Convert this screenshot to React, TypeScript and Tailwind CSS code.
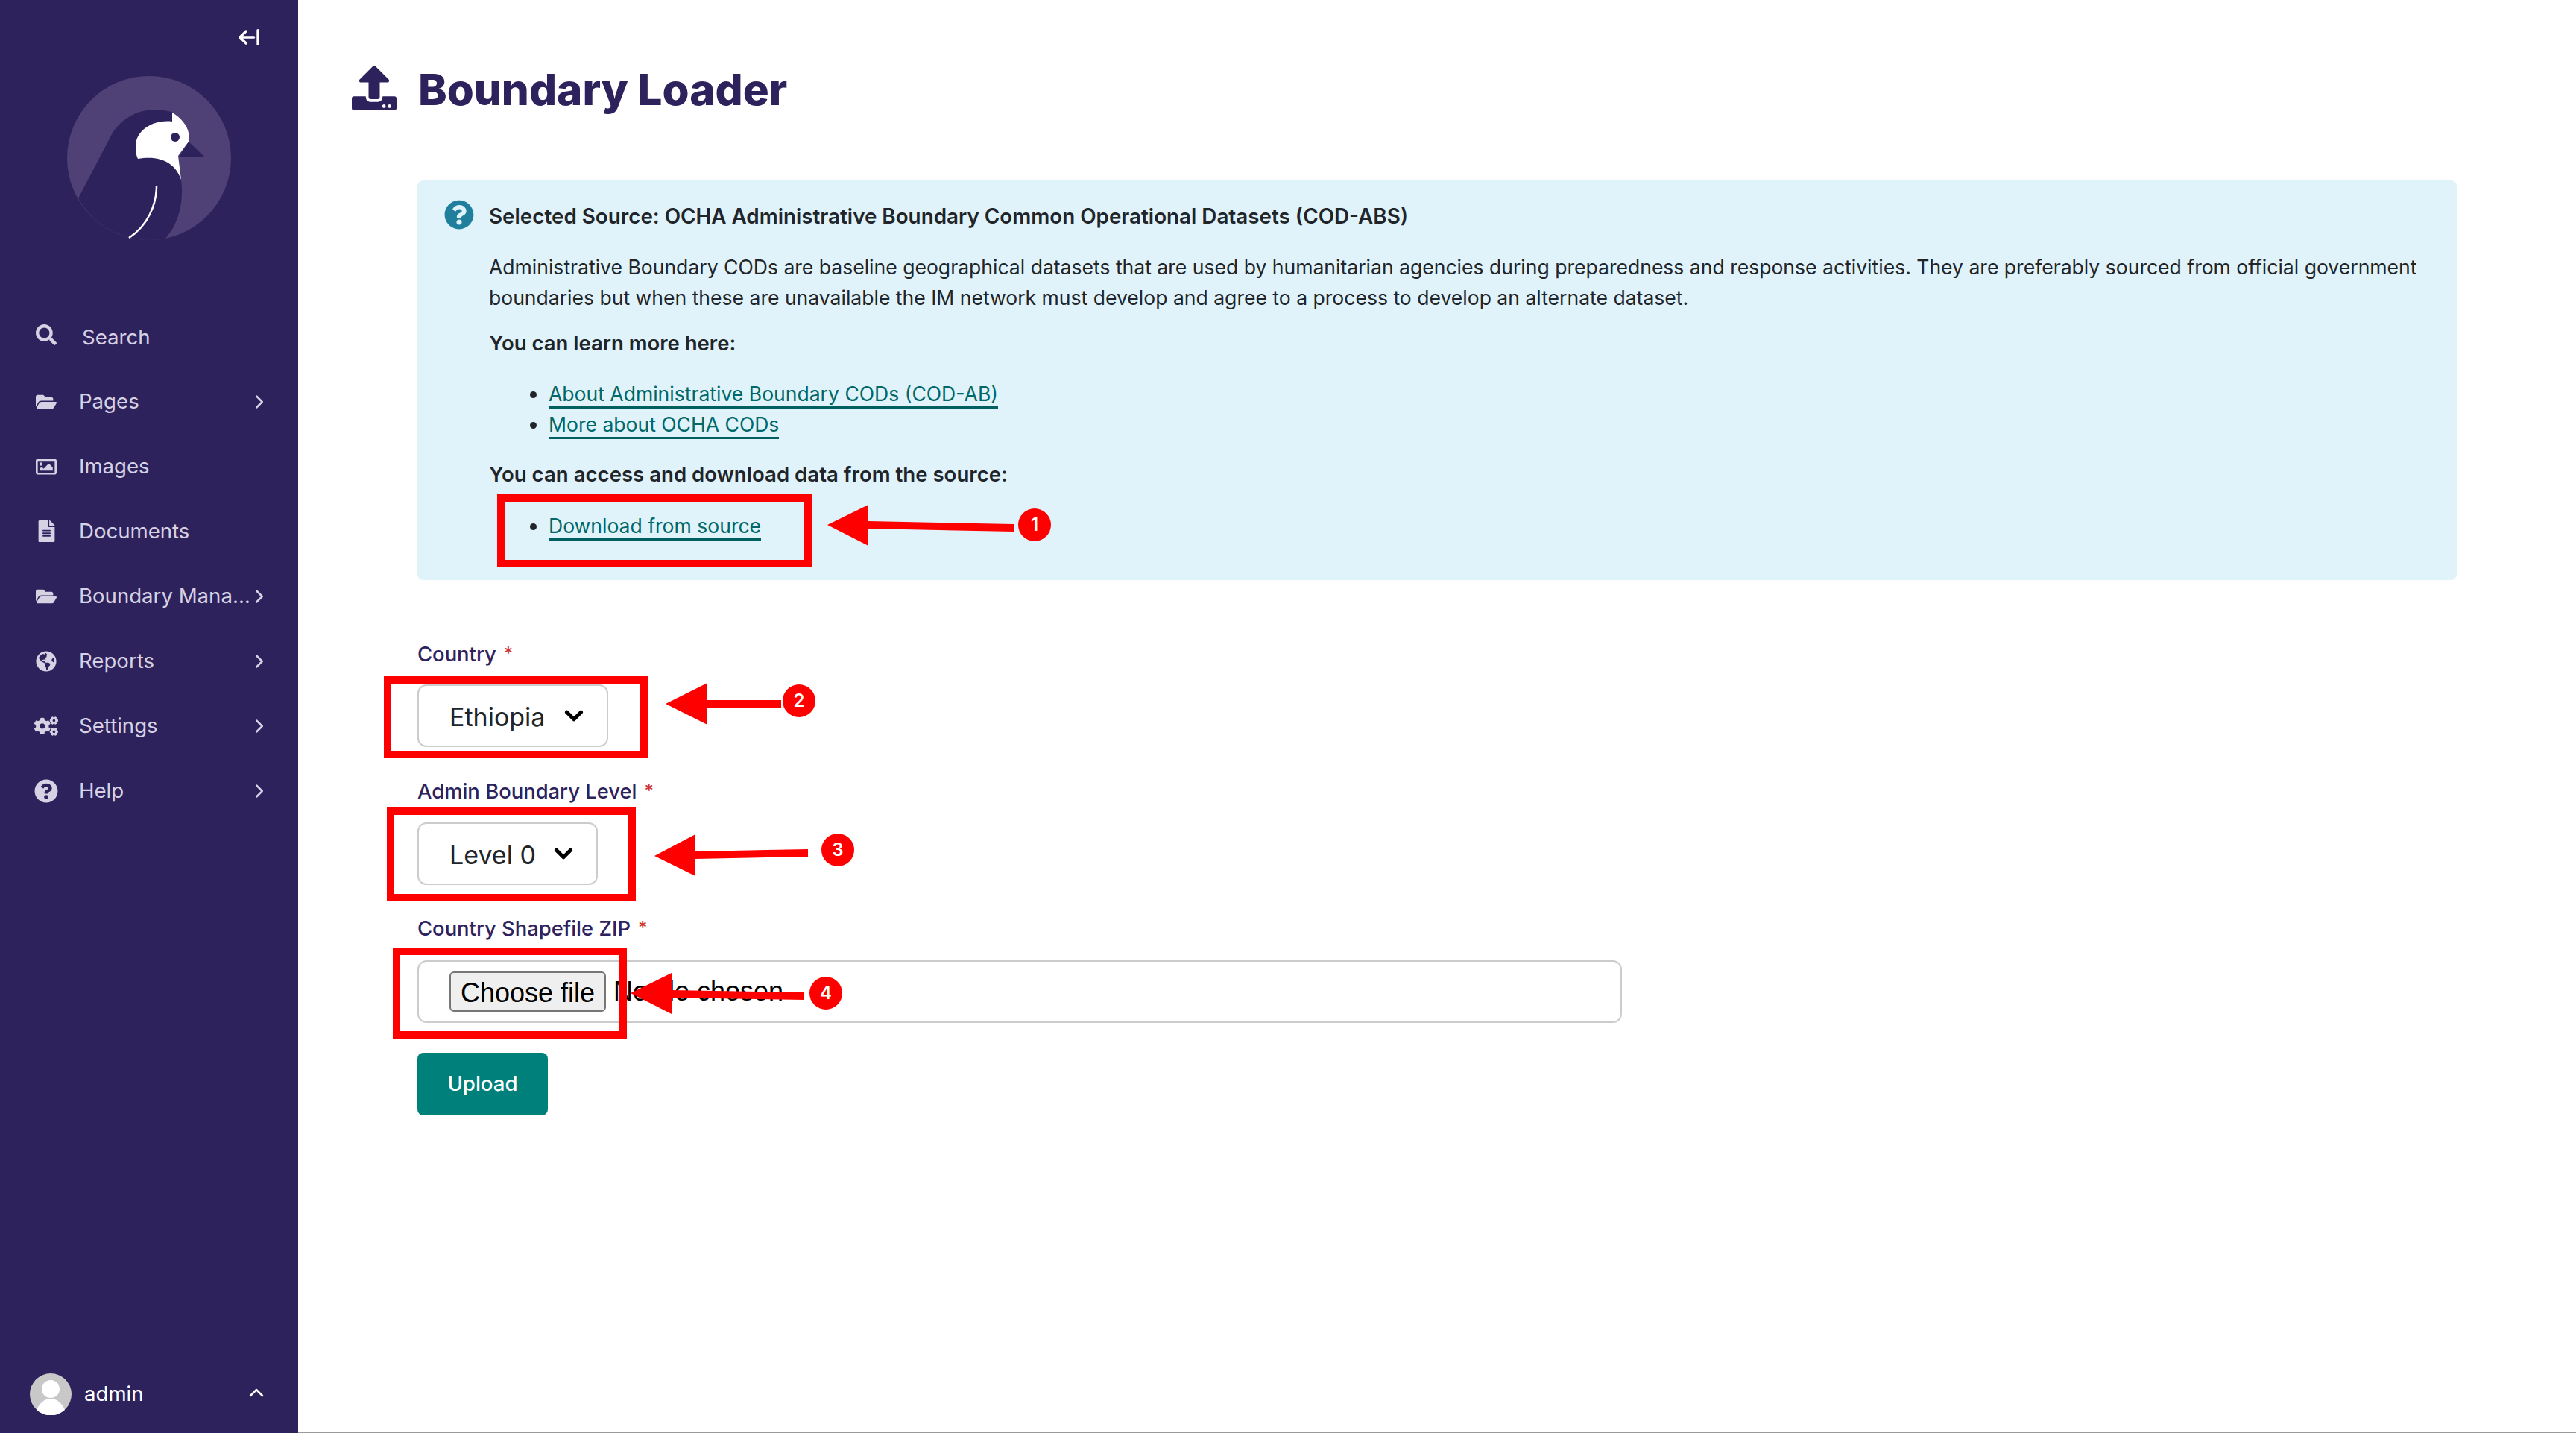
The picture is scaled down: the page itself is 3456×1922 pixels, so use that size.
import { ArrowLeftFromLine, ChevronDown, ChevronRight, ChevronUp } from "lucide-react";
import {
  FaCogs,
  FaFileAlt,
  FaFolderOpen,
  FaGlobeAmericas,
  FaQuestionCircle,
  FaRegImage,
  FaSearch,
  FaUpload,
} from "react-icons/fa";

const NAV = [
  { label: "Pages", icon: <FaFolderOpen size={28} />, more: true },
  { label: "Images", icon: <FaRegImage size={28} />, more: false },
  { label: "Documents", icon: <FaFileAlt size={29} />, more: false },
  { label: "Boundary Mana…", icon: <FaFolderOpen size={28} />, more: true },
  { label: "Reports", icon: <FaGlobeAmericas size={28} />, more: true },
  { label: "Settings", icon: <FaCogs size={32} />, more: true },
  { label: "Help", icon: <FaQuestionCircle size={32} />, more: true },
];

function Logo() {
  return (
    <svg viewBox="0 0 400 230" className="w-[400px] h-[230px]">
      <circle cx="200" cy="112" r="110" fill="#4f4175" />
      {/* body */}
      <path
        d="M105 166 L150 80 C165 55 190 47 207 47 C215 47 225 48 232 51 L232 115 L243 141 C247 170 240 200 222 220 A110 110 0 0 1 105 166 Z"
        fill="#2e225d"
      />
      {/* beak */}
      <path d="M253 90 L274 110 L240 110 Z" fill="#2e225d" />
      {/* head */}
      <path
        d="M231 51 C243 58 251 68 253 78 L253 90 L239 109 L243 141 C235 118 215 108 185 113 C182 107 182 100 182 95 C183 75 205 60 231 63 Z"
        fill="#ffffff"
      />
      <circle cx="235" cy="84" r="6" fill="#2e225d" />
      {/* wing */}
      <path d="M210 149 C210 175 198 203 173 219" fill="none" stroke="#ffffff" strokeWidth="2.5" />
    </svg>
  );
}

function Sidebar() {
  return (
    <aside className="w-[400px] shrink-0 bg-[#2e225d] flex flex-col font-['Inter',sans-serif] text-[27.6px] text-[#d6d2e4]">
      <div className="h-[100px] flex justify-end items-start pt-[34px] pr-[50px] text-white">
        <ArrowLeftFromLine size={32} strokeWidth={2.5} />
      </div>
      <Logo />
      <nav className="mt-[78px] flex flex-col">
        <div className="h-[87px] flex items-center pl-[48px]">
          <span className="w-[28px] flex justify-center -mt-[6px]">
            <FaSearch size={28} />
          </span>
          <span className="ml-[34px] mt-[2px]">Search</span>
        </div>
        {NAV.map((item) => (
          <div key={item.label} className="h-[87px] flex items-center pl-[48px] pr-[37px]">
            <span className="w-[28px] flex justify-center">
              <span className="shrink-0">{item.icon}</span>
            </span>
            <span className="ml-[30px] flex-1 min-w-0 whitespace-nowrap">{item.label}</span>
            {item.more && <ChevronRight size={30} strokeWidth={2} className="shrink-0" />}
          </div>
        ))}
      </nav>
      <div className="mt-auto h-[80px] mb-[12px] flex items-center pl-[40px] pr-[40px] text-white">
        <svg viewBox="0 0 56 56" className="w-[56px] h-[56px]">
          <circle cx="28" cy="28" r="28" fill="#c8c8c8" />
          <circle cx="28" cy="21" r="12" fill="#ffffff" />
          <path d="M9 49 C13 40 20 34 28 34 C36 34 43 40 47 49 A28 28 0 0 1 9 49 Z" fill="#ffffff" />
        </svg>
        <span className="ml-[17px] flex-1">admin</span>
        <ChevronUp size={32} strokeWidth={1.9} className="-mt-[4px]" />
      </div>
    </aside>
  );
}

function DocLink({ children }: { children: string }) {
  return (
    <li className="flex items-center">
      <span className="w-[9px] h-[9px] rounded-full bg-[#212529] ml-[55px] mr-[16px]" />
      <a className="text-[#006868] border-b-[3px] border-[#006060] leading-[34px]">{children}</a>
    </li>
  );
}

function Alert() {
  return (
    <section className="h-[536px] rounded-[8px] bg-[#e0f3fb] pt-[28px] pl-[36px] flex text-[#212529] text-[26.55px] leading-[41px]">
      <span className="w-[40px] h-[40px] shrink-0 text-[#1f7f9c] -mt-[2px]">
        <FaQuestionCircle size={40} />
      </span>
      <div className="ml-[20px]">
        <p className="font-semibold text-[27.8px]">
          Selected Source: OCHA Administrative Boundary Common Operational Datasets (COD-ABS)
        </p>
        <p className="mt-[27px]">
          Administrative Boundary CODs are baseline geographical datasets that are used by humanitarian agencies during
          preparedness and response activities. They are preferably sourced from official government boundaries but when
          these are unavailable the IM network must develop and agree to a process to develop an alternate dataset.
        </p>
        <p className="mt-[20px] font-semibold text-[27.5px]">You can learn more here:</p>
        <ul className="mt-[30px] flex flex-col">
          <DocLink>About Administrative Boundary CODs (COD-AB)</DocLink>
          <div className="h-[4px]" />
          <DocLink>More about OCHA CODs</DocLink>
        </ul>
        <p className="mt-[27px] font-semibold text-[27.6px]">You can access and download data from the source:</p>
        <ul className="mt-[31px]">
          <DocLink>Download from source</DocLink>
        </ul>
      </div>
    </section>
  );
}

function FieldLabel({ children }: { children: string }) {
  return (
    <div className="text-[#2e225d] text-[27.4px] leading-[42px] font-medium flex">
      {children}
      <span className="text-[#d0342c] ml-[10px] text-[24px]">*</span>
    </div>
  );
}

function SelectBox({ value, width }: { value: string; width: string }) {
  return (
    <div className={`${width} h-[84px] border-2 border-[#cccccc] rounded-[12px] bg-white flex items-center pl-[41px] text-[34px] text-[#212529]`}>
      <span className="flex-1 mt-[2px]">{value}</span>
      <ChevronDown size={38} strokeWidth={3.2} className="mr-[25px] text-black" />
    </div>
  );
}

function Annotations() {
  return (
    <>
      <div className="absolute left-[667px] top-[663px] w-[422px] h-[98px] border-[10px] border-[#ff0000]" />
      <div className="absolute left-[515px] top-[907px] w-[354px] h-[110px] border-[10px] border-[#ff0000]" />
      <div className="absolute left-[519px] top-[1083px] w-[334px] h-[126px] border-[10px] border-[#ff0000]" />
      <div className="absolute left-[527px] top-[1271px] w-[314px] h-[122px] border-[10px] border-[#ff0000]" />
      <svg className="absolute left-0 top-0 w-[3456px] h-[1922px] pointer-events-none" viewBox="0 0 3456 1922">
        <g fill="#ff0000">
          <polygon points="1110,704 1165,677 1165,699 1360,703 1360,713 1165,709 1165,732" />
          <polygon points="893,944 949,916 949,939 1048,939 1048,949 949,949 949,972" />
          <polygon points="878,1148 933,1119 933,1142 1084,1139 1084,1149 933,1152 933,1175" />
          <polygon points="846,1332 901,1305 901,1328 1079,1331 1079,1341 901,1338 901,1360" />
        </g>
      </svg>
      <span className="absolute left-[1366px] top-[682px] w-[44px] h-[44px] rounded-full bg-[#ff0000] text-white text-[24px] font-semibold flex items-center justify-center">1</span>
      <span className="absolute left-[1050px] top-[918px] w-[44px] h-[44px] rounded-full bg-[#ff0000] text-white text-[24px] font-semibold flex items-center justify-center">2</span>
      <span className="absolute left-[1102px] top-[1118px] w-[44px] h-[44px] rounded-full bg-[#ff0000] text-white text-[24px] font-semibold flex items-center justify-center">3</span>
      <span className="absolute left-[1086px] top-[1310px] w-[44px] h-[44px] rounded-full bg-[#ff0000] text-white text-[24px] font-semibold flex items-center justify-center">4</span>
    </>
  );
}

export default function App() {
  return (
    <div className="relative flex w-[3456px] h-[1922px] overflow-hidden bg-white font-['Inter',sans-serif]">
      <Sidebar />
      <main className="flex-1 border-b-2 border-[#999999] px-[160px]">
        <header className="h-[242px] -ml-[88px] flex items-start pt-[88px]">
          <FaUpload size={60} className="text-[#2e225d]" />
          <h1 className="ml-[29px] mt-[-2px] text-[58.3px] leading-[68px] font-extrabold text-[#2e225d]">
            Boundary Loader
          </h1>
        </header>
        <Alert />
        <form className="mt-[78px]">
          <FieldLabel>Country</FieldLabel>
          <div className="mt-[20px]">
            <SelectBox value="Ethiopia" width="w-[256px]" />
          </div>
          <div className="mt-[38px]">
            <FieldLabel>Admin Boundary Level</FieldLabel>
          </div>
          <div className="mt-[21px]">
            <SelectBox value="Level 0" width="w-[242px]" />
          </div>
          <div className="mt-[37px]">
            <FieldLabel>Country Shapefile ZIP</FieldLabel>
          </div>
          <div className="mt-[22px] w-[1616px] h-[84px] border-2 border-[#cccccc] rounded-[12px] flex items-center pl-[41px] font-['Liberation_Sans',sans-serif] text-[36px] text-black">
            <button type="button" className="w-[210px] h-[54px] bg-[#efefef] border-2 border-[#767676] rounded-[6px]">
              Choose file
            </button>
            <span className="ml-[10px]">No file chosen</span>
          </div>
          <button type="button" className="mt-[40px] w-[175px] h-[84px] bg-[#00807b] rounded-[8px] text-white text-[27.6px] font-medium">
            Upload
          </button>
        </form>
      </main>
      <Annotations />
    </div>
  );
}
